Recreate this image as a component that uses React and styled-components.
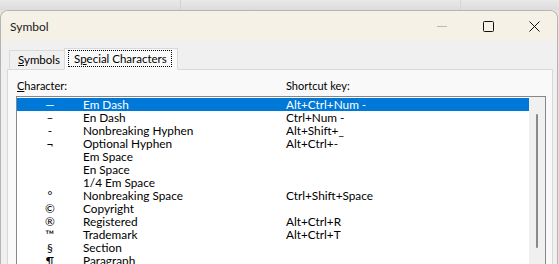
import React from "react";
import styled, { createGlobalStyle } from "styled-components";

const FONT = `"Segoe UI", Lato, "Liberation Sans", sans-serif`;

const Global = createGlobalStyle`
  html, body { margin: 0; padding: 0; }
  body {
    width: 559px;
    height: 264px;
    overflow: hidden;
    background: #e4e4e4;
    font-family: ${FONT};
  }
`;

const Desktop = styled.div`
  height: 264px;
  padding-top: 10px;
  box-sizing: border-box;
  background:
    linear-gradient(to right, transparent 180px, #d2d2d2 180px, #d2d2d2 181px, transparent 181px,
      transparent 460px, #d6d6d6 460px, #d6d6d6 461px, transparent 461px),
    linear-gradient(to bottom, #e9e9e9, #dcdcdc);
  background-size: 100% 10px, 100% 10px;
  background-repeat: no-repeat;
`;

const Window = styled.div`
  width: 558px;
  height: 260px;
  box-sizing: border-box;
  border: 1px solid #b4b4b4;
  border-bottom: none;
  border-radius: 8px 8px 0 0;
  overflow: hidden;
  background: #f0f0f0;
  display: flex;
  flex-direction: column;
`;

const TitleBar = styled.div`
  height: 30px;
  flex: none;
  background: #f6f1e7;
  display: flex;
  align-items: center;
  padding-left: 9px;
`;

const Title = styled.div`
  flex: 1;
  font-size: 12px;
  color: #1a1a1a;
`;

const CaptionButton = styled.div`
  width: 46px;
  height: 30px;
  display: flex;
  align-items: center;
  justify-content: center;
`;

const Body = styled.div`
  flex: 1;
  padding: 7px 4px 0 6px;
  display: flex;
  flex-direction: column;
`;

const TabRow = styled.div`
  display: flex;
  align-items: flex-end;
  height: 22px;
  padding-left: 2px;
  position: relative;
  z-index: 1;
  margin-bottom: -1px;
`;

const Tab = styled.div`
  box-sizing: border-box;
  height: ${(p) => (p.$active ? "22px" : "20px")};
  padding: ${(p) => (p.$active ? "2px 6px 0 4px" : "1px 4px 0 8px")};
  border: 1px solid #d9d9d9;
  border-bottom: ${(p) => (p.$active ? "1px solid #f9f9f9" : "1px solid #d9d9d9")};
  background: ${(p) => (p.$active ? "#f9f9f9" : "#f0f0f0")};
  margin-left: ${(p) => (p.$active ? "-1px" : "0")};
  font-size: 11.5px;
  color: #000;
  line-height: 16px;
  white-space: nowrap;
`;

const Focus = styled.span`
  display: inline-block;
  outline: 1px dotted #000;
  padding: 0 4px 0 5px;
  line-height: 15px;
`;

const Panel = styled.div`
  flex: 1;
  background: #f9f9f9;
  border: 1px solid #d9d9d9;
  border-bottom: none;
  padding: 8px 6px 0 8px;
  display: flex;
  flex-direction: column;
`;

const Header = styled.div`
  display: grid;
  grid-template-columns: 269px 1fr;
  font-size: 11px;
  line-height: 16px;
  color: #000;
  padding-left: 1px;
  margin-bottom: 2px;
`;

const ListBox = styled.div`
  flex: 1;
  border: 1px solid #828790;
  border-bottom: none;
  background: #fff;
  display: flex;
  padding: 1px 0 0 0;
`;

const Rows = styled.div`
  flex: 1;
`;

const Row = styled.div`
  display: grid;
  grid-template-columns: 66px 203px 1fr;
  height: 13px;
  font-size: 11.8px;
  line-height: 13px;
  background: ${(p) => (p.$selected ? "#0078d7" : "transparent")};
  color: ${(p) => (p.$selected ? "#fff" : "#000")};
  white-space: nowrap;
`;

const Glyph = styled.span`
  text-align: center;
`;

const ScrollTrack = styled.div`
  width: 16px;
  background: #f0f0f0;
  display: flex;
  justify-content: center;
  padding-top: 17px;
  margin-top: -1px;
`;

const Thumb = styled.div`
  width: 2px;
  height: 134px;
  background: #8a8a8a;
  border-radius: 1px;
`;

const U = styled.span`
  text-decoration: underline;
`;

const rows = [
  ["\u2014", "Em Dash", "Alt+Ctrl+Num -"],
  ["\u2013", "En Dash", "Ctrl+Num -"],
  ["-", "Nonbreaking Hyphen", "Alt+Shift+_"],
  ["\u00ac", "Optional Hyphen", "Alt+Ctrl+-"],
  ["", "Em Space", ""],
  ["", "En Space", ""],
  ["", "1/4 Em Space", ""],
  ["\u00b0", "Nonbreaking Space", "Ctrl+Shift+Space"],
  ["\u00a9", "Copyright", ""],
  ["\u00ae", "Registered", "Alt+Ctrl+R"],
  ["\u2122", "Trademark", "Alt+Ctrl+T"],
  ["\u00a7", "Section", ""],
  ["\u00b6", "Paragraph", ""],
];

export default function App() {
  return (
    <>
      <Global />
      <Desktop>
        <Window>
          <TitleBar>
            <Title>Symbol</Title>
            <CaptionButton>
              <svg width="10" height="10" viewBox="0 0 10 10">
                <path d="M0 5.5h10" stroke="#b9b9b9" strokeWidth="1" />
              </svg>
            </CaptionButton>
            <CaptionButton>
              <svg width="11" height="11" viewBox="0 0 11 11">
                <rect x="0.5" y="0.5" width="10" height="10" rx="1" fill="none" stroke="#111" strokeWidth="1" />
              </svg>
            </CaptionButton>
            <CaptionButton>
              <svg width="11" height="11" viewBox="0 0 11 11">
                <path d="M0.5 0.5L10.5 10.5M10.5 0.5L0.5 10.5" stroke="#111" strokeWidth="1" />
              </svg>
            </CaptionButton>
          </TitleBar>
          <Body>
            <TabRow>
              <Tab>
                <U>S</U>ymbols
              </Tab>
              <Tab $active>
                <Focus>
                  S<U>p</U>ecial Characters
                </Focus>
              </Tab>
            </TabRow>
            <Panel>
              <Header>
                <span>
                  <U>C</U>haracter:
                </span>
                <span>Shortcut key:</span>
              </Header>
              <ListBox>
                <Rows>
                  {rows.map(([g, n, k], i) => (
                    <Row key={n} $selected={i === 0}>
                      <Glyph>{g}</Glyph>
                      <span>{n}</span>
                      <span>{k}</span>
                    </Row>
                  ))}
                </Rows>
                <ScrollTrack>
                  <Thumb />
                </ScrollTrack>
              </ListBox>
            </Panel>
          </Body>
        </Window>
      </Desktop>
    </>
  );
}
